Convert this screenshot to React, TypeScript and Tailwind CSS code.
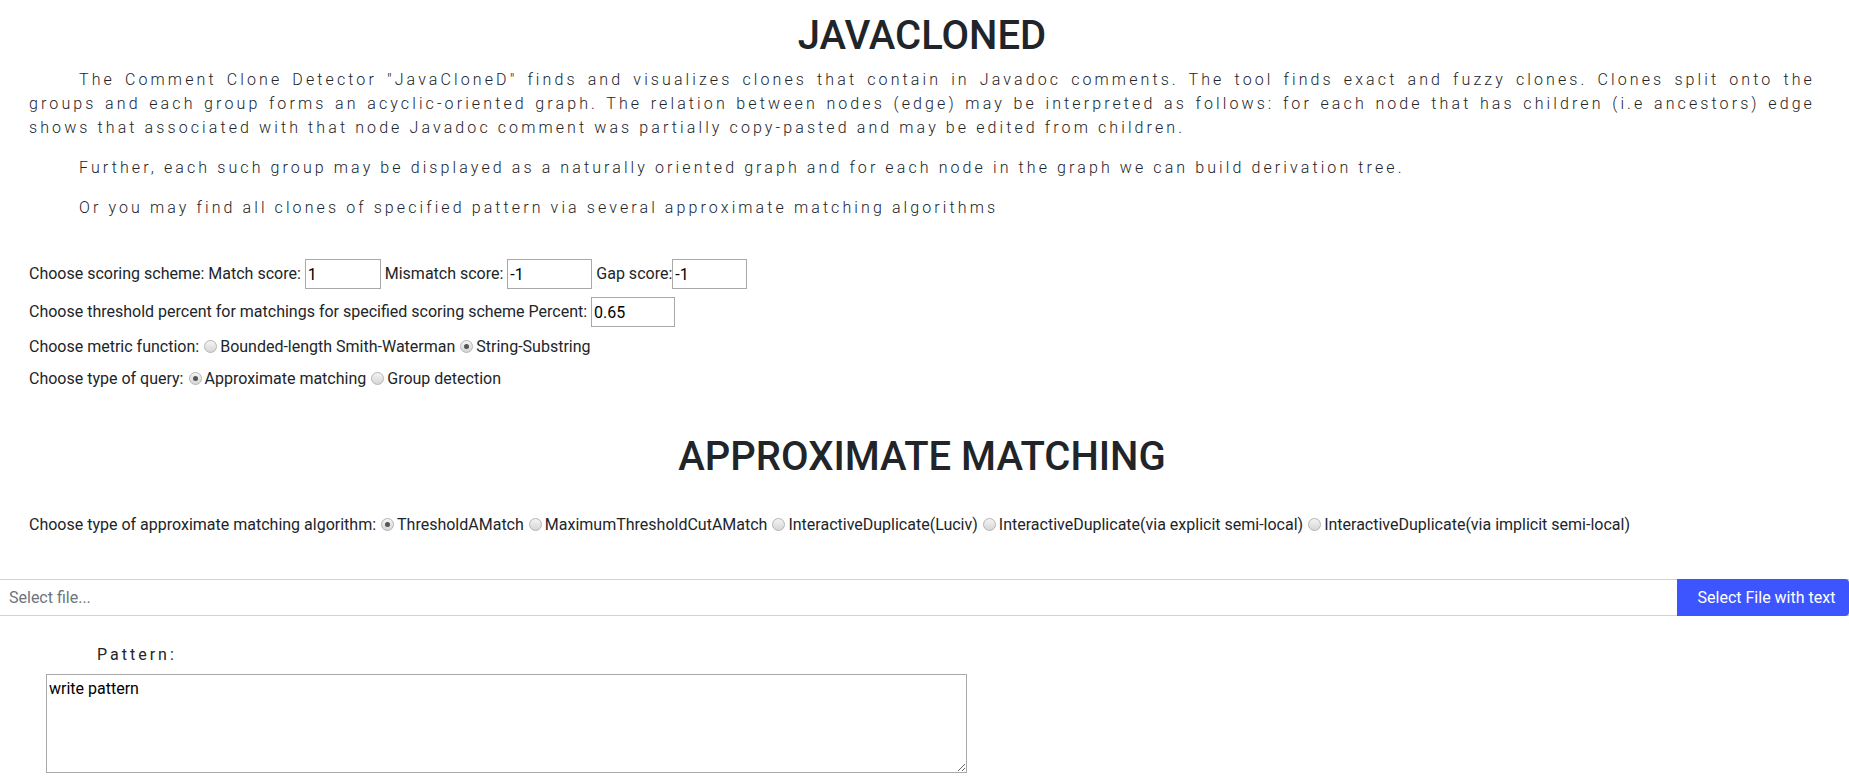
import React from 'react';

const Radio = ({ checked = false }: { checked?: boolean }) => (
  <span className="inline-block align-[-1px] w-[13px] h-[13px] p-[3px] mr-[3px] ml-[5px] rounded-full border border-[#b4b4b4] bg-gradient-to-b from-[#f4f4f4] to-[#d6d6d6]">
    {checked && <span className="block w-[5px] h-[5px] rounded-full bg-[#555]" />}
  </span>
);

const Box = ({ value, w }: { value: string; w: string }) => (
  <input
    readOnly
    value={value}
    className={`${w} h-[30px] border border-[#a9a9a9] px-[2px] text-[16px] text-black font-['Roboto'] align-middle outline-none`}
  />
);

export default function App() {
  return (
    <div className="min-h-[783px] bg-white font-['Roboto',sans-serif] text-[#212529] text-[16px] leading-[24px]">
      <div className="pl-[29px] pr-[34px]">
        <h1 className="pt-[12px] mb-[8px] text-center text-[40px] leading-[48px] font-medium">JAVACLONED</h1>

        <div className="font-light tracking-[3.1px] text-justify">
          <p className="indent-[50px] mb-[16px]">
            The Comment Clone Detector "JavaCloneD" finds and visualizes clones that contain in Javadoc comments. The tool finds exact and fuzzy clones. Clones split onto the groups and each group forms an acyclic-oriented graph. The relation between nodes (edge) may be interpreted as follows: for each node that has children (i.e ancestors) edge shows that associated with that node Javadoc comment was partially copy-pasted and may be edited from children.
          </p>
          <p className="indent-[50px] mb-[16px]">
            Further, each such group may be displayed as a naturally oriented graph and for each node in the graph we can build derivation tree.
          </p>
          <p className="indent-[50px]">
            Or you may find all clones of specified pattern via several approximate matching algorithms
          </p>
        </div>

        <div className="mt-[39px] flex flex-col gap-[8px]">
          <div className="h-[30px] flex items-center whitespace-pre">
            <span>Choose scoring scheme: Match score: </span>
            <Box value="1" w="w-[76px]" />
            <span> Mismatch score: </span>
            <Box value="-1" w="w-[85px]" />
            <span> Gap score:</span>
            <Box value="-1" w="w-[75px]" />
          </div>
          <div className="h-[30px] flex items-center whitespace-pre">
            <span>Choose threshold percent for matchings for specified scoring scheme Percent: </span>
            <Box value="0.65" w="w-[84px]" />
          </div>
          <div>
            Choose metric function:<Radio />Bounded-length Smith-Waterman<Radio checked />String-Substring
          </div>
          <div>
            Choose type of query:<Radio checked />Approximate matching<Radio />Group detection
          </div>
        </div>

        <h2 className="mt-[42px] text-center text-[40px] leading-[48px] font-medium">APPROXIMATE MATCHING</h2>

        <div className="mt-[32px]">
          Choose type of approximate matching algorithm:<Radio checked />ThresholdAMatch<Radio />MaximumThresholdCutAMatch<Radio />InteractiveDuplicate(Luciv)<Radio />InteractiveDuplicate(via explicit semi-local)<Radio />InteractiveDuplicate(via implicit semi-local)
        </div>
      </div>

      <div className="mt-[42px] flex h-[37px] border-y border-[#ced4da]">
        <div className="flex-1 flex items-center pl-[9px] text-[#6c757d]">Select file...</div>
        <button className="w-[172px] -my-px pl-[7px] bg-[#3d55ff] text-white rounded-r-[4px] text-[16px]">Select File with text</button>
      </div>

      <div className="mt-[27px] pl-[97px] tracking-[3px]">Pattern:</div>
      <div className="mt-[7px] pl-[46px]">
        <textarea
          readOnly
          value="write pattern"
          className="block w-[921px] h-[99px] border border-[#a9a9a9] px-[2px] pt-[4px] text-[16px] leading-[20px] text-black font-['Roboto'] outline-none"
        />
      </div>
    </div>
  );
}
